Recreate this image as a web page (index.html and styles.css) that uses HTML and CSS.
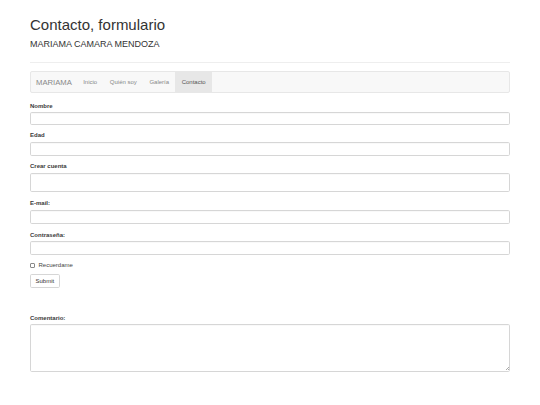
FILE: index.html
```html
<!DOCTYPE html>
<html lang="es">
<head>
<meta charset="utf-8">
<title>Contacto, formulario</title>
<link rel="stylesheet" href="styles.css">
</head>
<body>
<div class="container">
  <header class="page-header">
    <h1 class="title">Contacto, formulario</h1>
    <h2 class="subtitle">MARIAMA CAMARA MENDOZA</h2>
  </header>
  <nav class="navbar">
    <span class="brand">MARIAMA</span>
    <a class="nav-link" href="#">Inicio</a>
    <a class="nav-link" href="#">Quién soy</a>
    <a class="nav-link" href="#">Galería</a>
    <a class="nav-link active" href="#">Contacto</a>
  </nav>
  <form class="form">
    <div class="form-group">
      <label class="label">Nombre</label>
      <input class="control control-sm" type="text">
    </div>
    <div class="form-group">
      <label class="label">Edad</label>
      <input class="control" type="text">
    </div>
    <div class="form-group">
      <label class="label">Crear cuenta</label>
      <input class="control control-lg" type="text">
    </div>
    <div class="form-group">
      <label class="label">E-mail:</label>
      <input class="control control-md" type="email">
    </div>
    <div class="form-group">
      <label class="label">Contraseña:</label>
      <input class="control" type="password">
    </div>
    <div class="checkbox">
      <input class="check" type="checkbox"><span class="check-text">Recuerdame</span>
    </div>
    <button class="btn" type="button">Submit</button>
    <div class="comment">
      <label class="label">Comentario:</label>
      <textarea class="control area"></textarea>
    </div>
  </form>
</div>
</body>
</html>
```
FILE: styles.css
```css
* { box-sizing: border-box; }
html, body { margin: 0; padding: 0; background: #fff; }
body {
  font-family: "Liberation Sans", Arial, Helvetica, sans-serif;
  color: #333;
}
.container { padding: 0 30px; }
.page-header {
  padding-bottom: 12px;
  border-bottom: 1px solid #eee;
}
.title {
  margin: 16px 0 0;
  font-size: 15px;
  line-height: 17px;
  font-weight: normal;
  color: #333;
}
.subtitle {
  margin: 6px 0 0;
  font-size: 9px;
  line-height: 11px;
  font-weight: normal;
  color: #333;
}
.navbar {
  margin-top: 8px;
  height: 22px;
  display: flex;
  align-items: stretch;
  background: #f8f8f8;
  border: 1px solid #e7e7e7;
  border-radius: 2px;
}
.brand {
  display: flex;
  align-items: center;
  padding: 0 5px;
  font-size: 7.7px;
  font-weight: normal;
  color: #888;
}
.nav-link {
  display: flex;
  align-items: center;
  padding: 0 6.3px;
  font-size: 6px;
  color: #888;
  text-decoration: none;
}
.nav-link.active {
  background: #e7e7e7;
  color: #555;
}
.form { margin-top: 8.8px; }
.form-group {
  display: flex;
  flex-direction: column;
  margin-bottom: 6.7px;
}
.label {
  display: block;
  font-size: 6px;
  line-height: 8.5px;
  font-weight: bold;
  color: #3a3a3a;
  margin-bottom: 2px;
}
.control {
  display: block;
  width: 100%;
  height: 14px;
  margin: 0;
  padding: 0 5px;
  font-family: inherit;
  font-size: 6px;
  color: #555;
  background: #fff;
  border: 1px solid #d6d6d6;
  border-radius: 1.7px;
  box-shadow: inset 0 0.5px 0.5px rgba(0,0,0,.05);
  outline: none;
}
.control-sm { height: 12.3px; }
.control-md { height: 14.3px; }
.control-lg { height: 19.5px; }
.checkbox {
  display: flex;
  align-items: center;
  height: 6.6px;
  font-size: 6px;
  line-height: 6.6px;
  color: #444;
}
.check {
  appearance: none;
  -webkit-appearance: none;
  width: 5px;
  height: 5px;
  margin: 0 3.5px 0 0;
  border: 0.7px solid #8a8a8a;
  border-radius: 1px;
  background: #fff;
}
.btn {
  display: block;
  margin-top: 5.5px;
  height: 14px;
  padding: 0 4.5px;
  font-family: inherit;
  font-size: 6px;
  color: #333;
  background: #fff;
  border: 1px solid #d6d6d6;
  border-radius: 1.7px;
}
.comment {
  margin-top: 26px;
}
.area {
  height: 47.2px;
  padding: 3px 5px;
  resize: none;
  background-color: #fff;
  background-image:
    linear-gradient(135deg, transparent 0 62%, #aaa 62% 72%, transparent 72% 100%),
    linear-gradient(135deg, transparent 0 82%, #aaa 82% 92%, transparent 92% 100%);
  background-repeat: no-repeat;
  background-size: 4px 4px, 4px 4px;
  background-position: right 0.5px bottom 0.5px, right 0.5px bottom 0.5px;
}
```
